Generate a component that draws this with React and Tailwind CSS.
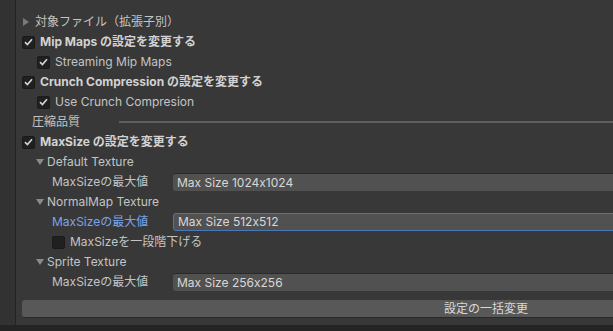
import React from "react";

const font = { fontFamily: "Inter, 'Noto Sans CJK JP', sans-serif" };

function Check({ checked }) {
  return (
    <span className="w-[13px] h-[13px] shrink-0 rounded-[2px] bg-[#202020] border border-[#1a1a1a] flex items-center justify-center">
      {checked && (
        <svg width="9" height="8" viewBox="0 0 9 8">
          <path d="M1 4.2 L3.4 6.5 L8 1.2" fill="none" stroke="#d6d6d6" strokeWidth="1.6" />
        </svg>
      )}
    </span>
  );
}

function Triangle({ open }) {
  return (
    <svg width="8" height="8" viewBox="0 0 8 8" className="shrink-0">
      {open ? (
        <path d="M0 1 L8 1 L4 7 Z" fill="#8a8a8a" />
      ) : (
        <path d="M1 0 L7 4 L1 8 Z" fill="#7a7a7a" />
      )}
    </svg>
  );
}

function Row({ pl, children, className = "" }) {
  return (
    <div className={`h-[20px] flex items-center ${pl} ${className}`}>{children}</div>
  );
}

function Field({ label, value, focus }) {
  return (
    <div className="h-[20px] flex items-center pl-[53px]">
      <span className={`w-[121px] shrink-0 ${focus ? "text-[#7ba4e8]" : "text-[#c4c4c4]"}`}>
        {label}
      </span>
      <div
        className={`flex-1 h-[18px] rounded-[3px] bg-[#515151] flex items-center pl-[4px] text-[#d8d8d8] ${
          focus ? "border border-[#4a77b8]" : "border-t border-[#2a2a2a]"
        }`}
      >
        {value}
      </div>
    </div>
  );
}

export default function App() {
  return (
    <div
      className="w-[613px] h-[331px] overflow-hidden bg-[#383838] text-[12px] [font-feature-settings:'calt'_0]"
      style={font}
    >
      <div className="flex w-[980px] h-[325px]">
        <div className="w-[16px] shrink-0 bg-[#323232] border-r border-[#232323]" />
        <div className="flex-1 pt-[12px] pl-[6px] text-[#c4c4c4]">
          <Row pl="pl-[0px]" className="gap-[4px]">
            <Triangle open={false} />
            <span className="ml-[1px]">対象ファイル（拡張子別）</span>
          </Row>
          <Row pl="pl-[0px]" className="gap-[5px]">
            <Check checked />
            <span className="font-bold text-[#d2d2d2]">Mip Maps の設定を変更する</span>
          </Row>
          <Row pl="pl-[15px]" className="gap-[5px]">
            <Check checked />
            <span>Streaming Mip Maps</span>
          </Row>
          <Row pl="pl-[0px]" className="gap-[5px]">
            <Check checked />
            <span className="font-bold text-[#d2d2d2]">Crunch Compression の設定を変更する</span>
          </Row>
          <Row pl="pl-[15px]" className="gap-[5px]">
            <Check checked />
            <span>Use Crunch Compresion</span>
          </Row>
          <Row pl="pl-[10px]" className="gap-[8px]">
            <span className="w-[79px] shrink-0">圧縮品質</span>
            <div className="flex-1 h-[2px] bg-[#5e5e5e]" />
          </Row>
          <Row pl="pl-[0px]" className="gap-[5px]">
            <Check checked />
            <span className="font-bold text-[#d2d2d2]">MaxSize の設定を変更する</span>
          </Row>
          <Row pl="pl-[14px]" className="gap-[3px]">
            <Triangle open />
            <span>Default Texture</span>
          </Row>
          <div className="-ml-[23px]">
            <Field label="MaxSizeの最大値" value="Max Size 1024x1024" />
          </div>
          <Row pl="pl-[14px]" className="gap-[3px]">
            <Triangle open />
            <span>NormalMap Texture</span>
          </Row>
          <div className="-ml-[23px]">
            <Field label="MaxSizeの最大値" value="Max Size 512x512" focus />
          </div>
          <Row pl="pl-[30px]" className="gap-[5px]">
            <Check />
            <span>MaxSizeを一段階下げる</span>
          </Row>
          <Row pl="pl-[14px]" className="gap-[3px]">
            <Triangle open />
            <span>Sprite Texture</span>
          </Row>
          <div className="-ml-[23px]">
            <Field label="MaxSizeの最大値" value="Max Size 256x256" />
          </div>
          <div className="mt-[8px] h-[18px] w-[928px] rounded-[3px] bg-[#585858] border-b border-[#2a2a2a] flex items-center justify-center text-[#d8d8d8]">
            設定の一括変更
          </div>
        </div>
      </div>
      <div className="h-[6px] bg-[#242424]" />
    </div>
  );
}
